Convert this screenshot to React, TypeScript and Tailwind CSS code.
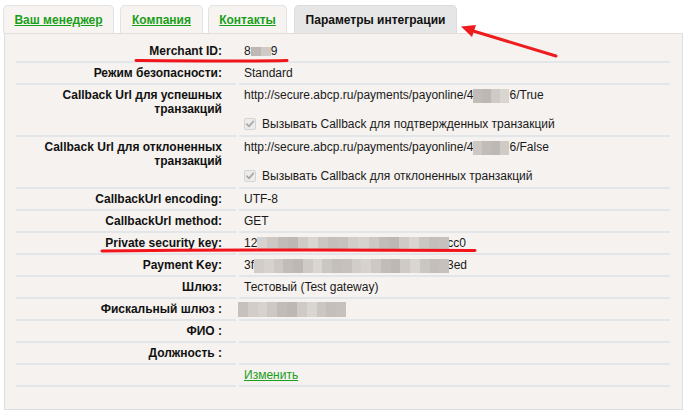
import React from "react";

const shades = ["#cfcac6", "#c4bfbb", "#d6d2ce", "#bdb8b4", "#cac6c2", "#d2cdc9", "#c1bcb8", "#d9d5d1", "#c6c1bd", "#cdc8c4"];

function Blur({ w, h = 14, seed = 0, className = "" }: { w: number; h?: number; seed?: number; className?: string }) {
  const n = Math.max(1, Math.round(w / 10));
  const cells = Array.from({ length: n }, (_, i) => shades[(i * 7 + seed * 3) % shades.length]);
  return (
    <span className={"inline-flex align-middle " + className} style={{ width: w, height: h }}>
      {cells.map((c, i) => (
        <span key={i} className="flex-1 h-full" style={{ background: c }} />
      ))}
    </span>
  );
}

function CheckBox() {
  return (
    <span className="inline-flex items-center justify-center w-[12px] h-[12px] rounded-[2px] border border-[#d4d4d4] bg-[#ececec] mr-[6px]">
      <svg width="10" height="10" viewBox="0 0 10 10">
        <path d="M1.8 5.2 L4 7.3 L8.3 2.4" stroke="#a9a9a9" strokeWidth="1.8" fill="none" strokeLinecap="round" strokeLinejoin="round" />
      </svg>
    </span>
  );
}

function Row({ label, children, multi = false, h }: { label: React.ReactNode; children?: React.ReactNode; multi?: boolean; h?: string }) {
  return (
    <div className="flex gap-x-[3px]">
      <div className={"w-[220px] border-b-2 border-[#e3e6e9] text-right font-bold text-[#111] pr-[14px] " + (multi ? "pt-[3px] leading-[14px] " : "py-[2px] leading-[16px] ") + (h ?? "")}>
        {label}
      </div>
      <div className={"w-[431px] border-b-2 border-[#e3e6e9] pl-[5px] py-[2px] leading-[16px] text-[#1a1a1a] " + (h ?? "")}>
        {children}
      </div>
    </div>
  );
}

export default function App() {
  const tabBase = "h-[28px] flex items-center justify-center rounded-t-[5px] border border-b-0 font-bold";
  return (
    <div className="relative w-[689px] h-[412px] bg-white overflow-hidden text-[12px]" style={{ fontFamily: '"Liberation Sans", Arial, sans-serif' }}>
      <div className="flex pt-[5px] pl-[3px]">
        <div className={tabBase + " w-[111px] border-[#e2e2e2] bg-[#f6f3f0]"}>
          <a className="text-[#1a9f1a] underline">Ваш менеджер</a>
        </div>
        <div className={tabBase + " w-[83px] ml-[6px] border-[#e2e2e2] bg-[#f6f3f0]"}>
          <a className="text-[#1a9f1a] underline">Компания</a>
        </div>
        <div className={tabBase + " w-[79px] ml-[5px] border-[#e2e2e2] bg-[#f6f3f0]"}>
          <a className="text-[#1a9f1a] underline">Контакты</a>
        </div>
        <div className={tabBase + " w-[163px] ml-[7px] border-[#dcdcdc] bg-[#e6e6e6] text-[#111]"}>
          Параметры интеграции
        </div>
      </div>
      <div className="ml-[4px] w-[679px] h-[377px] border border-[#e0dedc] bg-[#f5f2ef] pt-[7px] pl-[11px]">
        <Row label="Merchant ID:">
          <span>8</span>
          <Blur w={20} h={9} seed={1} />
          <span>9</span>
        </Row>
        <Row label="Режим безопасности:">Standard</Row>
        <Row label={<>Callback Url для успешных<br />транзакций</>} multi h="h-[52px]">
          <div className="whitespace-nowrap">
            http://secure.abcp.ru/payments/payonline/4<Blur w={36} h={14} seed={2} />6/True
          </div>
          <div className="mt-[13px] flex items-center">
            <CheckBox />
            Вызывать Callback для подтвержденных транзакций
          </div>
        </Row>
        <Row label={<>Callback Url для отклоненных<br />транзакций</>} multi h="h-[52px]">
          <div className="whitespace-nowrap">
            http://secure.abcp.ru/payments/payonline/4<Blur w={36} h={14} seed={3} />6/False
          </div>
          <div className="mt-[13px] flex items-center">
            <CheckBox />
            Вызывать Callback для отклоненных транзакций
          </div>
        </Row>
        <Row label="CallbackUrl encoding:">UTF-8</Row>
        <Row label="CallbackUrl method:">GET</Row>
        <Row label="Private security key:">
          <span className="whitespace-nowrap">
            12<Blur w={192} h={14} seed={4} className="-mr-[2px] relative" />cc0
          </span>
        </Row>
        <Row label="Payment Key:">
          <span className="whitespace-nowrap">
            3f<Blur w={195} h={14} seed={5} className="-mr-[2px] relative" />3ed
          </span>
        </Row>
        <Row label="Шлюз:">Тестовый (Test gateway)</Row>
        <Row label="Фискальный шлюз :">
          <Blur w={108} h={15} seed={6} className="-ml-[6px]" />
        </Row>
        <Row label="ФИО :" h="h-[22px]" />
        <Row label="Должность :" h="h-[22px]" />
        <Row label="" h="h-[22px]">
          <a className="text-[#1a9f1a] underline">Изменить</a>
        </Row>
      </div>
      <svg className="absolute left-0 top-0 pointer-events-none" width="689" height="412">
        <path d="M136 60.5 C 190 61, 240 61.5, 287 60.5" stroke="#f2141b" strokeWidth="3" fill="none" strokeLinecap="round" />
        <path d="M102 251 C 200 250, 330 249.5, 475 250.5" stroke="#f2141b" strokeWidth="3" fill="none" strokeLinecap="round" />
        <path d="M556 56 L470 30" stroke="#ee1c1c" strokeWidth="3" fill="none" strokeLinecap="round" />
        <path d="M461 26.5 L476 25 L472 37 Z" fill="#ee1c1c" />
      </svg>
    </div>
  );
}
